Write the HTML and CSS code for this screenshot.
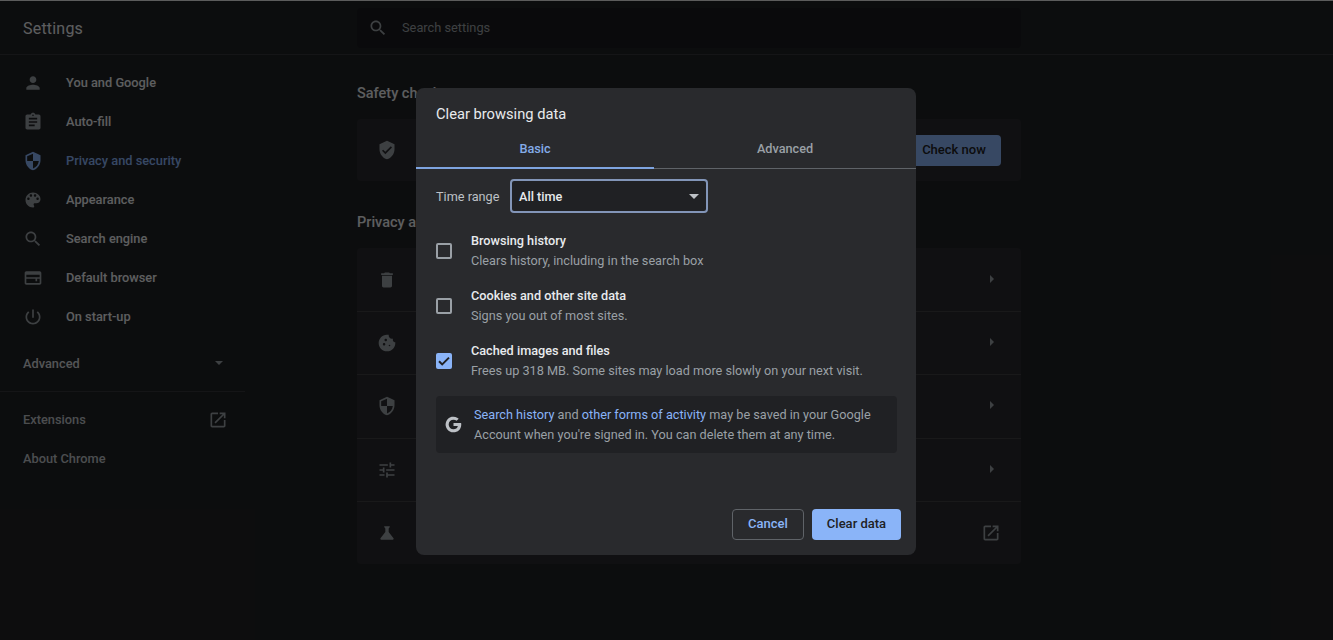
FILE: index.html
```html
<!DOCTYPE html>
<html lang="en">
<head>
    <meta charset="UTF-8">
    <title>Settings</title>
    <link rel="stylesheet" href="styles.css">
</head>
<body>
    <header class="topbar">
        <h1 class="app-title">Settings</h1>
        <div class="search-box">
            <svg class="icon" viewBox="0 0 24 24"><path d="M15.5 14h-.79l-.28-.27C15.41 12.59 16 11.11 16 9.5 16 5.91 13.09 3 9.5 3S3 5.91 3 9.5 5.91 16 9.5 16c1.61 0 3.09-.59 4.23-1.57l.27.28v.79l5 4.99L20.49 19l-4.99-5zm-6 0C7.01 14 5 11.99 5 9.5S7.01 5 9.5 5 14 7.01 14 9.5 11.99 14 9.5 14z"/></svg>
            <span>Search settings</span>
        </div>
    </header>

    <div class="content">
        <nav class="sidebar">
            <a class="nav-item">
                <svg class="icon" viewBox="0 0 24 24"><path d="M12 12c2.21 0 4-1.79 4-4s-1.79-4-4-4-4 1.79-4 4 1.79 4 4 4zm0 2c-2.67 0-8 1.34-8 4v2h16v-2c0-2.66-5.33-4-8-4z"/></svg>
                You and Google
            </a>
            <a class="nav-item">
                <svg class="icon" viewBox="0 0 24 24"><path d="M19 3h-4.18C14.4 1.84 13.3 1 12 1c-1.3 0-2.4.84-2.82 2H5c-1.1 0-2 .9-2 2v14c0 1.1.9 2 2 2h14c1.1 0 2-.9 2-2V5c0-1.1-.9-2-2-2zm-7 0c.55 0 1 .45 1 1s-.45 1-1 1-1-.45-1-1 .45-1 1-1zm2 14H7v-2h7v2zm3-4H7v-2h10v2zm0-4H7V7h10v2z"/></svg>
                Auto-fill
            </a>
            <a class="nav-item active">
                <svg class="icon" viewBox="0 0 24 24"><path d="M12 1L3 5v6c0 5.55 3.84 10.74 9 12 5.16-1.26 9-6.45 9-12V5l-9-4zm0 10.99h7c-.53 4.12-3.28 7.79-7 8.94V12H5V6.3l7-3.11v8.8z"/></svg>
                Privacy and security
            </a>
            <a class="nav-item">
                <svg class="icon" viewBox="0 0 24 24"><path d="M12 3c-4.97 0-9 4.03-9 9s4.03 9 9 9c.83 0 1.5-.67 1.5-1.5 0-.39-.15-.74-.39-1.01-.23-.26-.38-.61-.38-.99 0-.83.67-1.5 1.5-1.5H16c2.76 0 5-2.24 5-5 0-4.42-4.03-8-9-8zm-5.5 9c-.83 0-1.5-.67-1.5-1.5S5.67 9 6.5 9 8 9.67 8 10.5 7.33 12 6.5 12zm3-4C8.67 8 8 7.33 8 6.5S8.67 5 9.5 5s1.5.67 1.5 1.5S10.33 8 9.5 8zm5 0c-.83 0-1.5-.67-1.5-1.5S13.67 5 14.5 5s1.5.67 1.5 1.5S15.33 8 14.5 8zm3 4c-.83 0-1.5-.67-1.5-1.5S16.67 9 17.5 9s1.5.67 1.5 1.5-.67 1.5-1.5 1.5z"/></svg>
                Appearance
            </a>
            <a class="nav-item">
                <svg class="icon" viewBox="0 0 24 24"><path d="M15.5 14h-.79l-.28-.27C15.41 12.59 16 11.11 16 9.5 16 5.91 13.09 3 9.5 3S3 5.91 3 9.5 5.91 16 9.5 16c1.61 0 3.09-.59 4.23-1.57l.27.28v.79l5 4.99L20.49 19l-4.99-5zm-6 0C7.01 14 5 11.99 5 9.5S7.01 5 9.5 5 14 7.01 14 9.5 11.99 14 9.5 14z"/></svg>
                Search engine
            </a>
            <a class="nav-item">
                <svg class="icon" viewBox="0 0 24 24"><path d="M20 4H4c-1.1 0-2 .9-2 2v12c0 1.1.9 2 2 2h16c1.1 0 2-.9 2-2V6c0-1.1-.9-2-2-2zm0 14H4v-5h11v3h2v-3h3v5zm0-7H4V8h16v3z"/></svg>
                Default browser
            </a>
            <a class="nav-item">
                <svg class="icon" viewBox="0 0 24 24"><path d="M13 3h-2v10h2V3zm4.83 2.17l-1.42 1.42C17.99 7.86 19 9.81 19 12c0 3.87-3.13 7-7 7s-7-3.13-7-7c0-2.19 1.01-4.14 2.58-5.42L6.17 5.17C4.23 6.82 3 9.26 3 12c0 4.97 4.03 9 9 9s9-4.03 9-9c0-2.74-1.23-5.18-3.17-6.83z"/></svg>
                On start-up
            </a>
            <div class="nav-advanced">
                <span>Advanced</span>
                <span class="arrow-down"></span>
            </div>
            <a class="nav-link">
                <span>Extensions</span>
                <svg class="icon" viewBox="0 0 24 24"><path d="M19 19H5V5h7V3H5c-1.11 0-2 .9-2 2v14c0 1.1.89 2 2 2h14c1.1 0 2-.9 2-2v-7h-2v7zM14 3v2h3.59l-9.83 9.83 1.41 1.41L19 6.41V10h2V3h-7z"/></svg>
            </a>
            <a class="nav-link">About Chrome</a>
        </nav>

        <main class="main">
            <h2 class="section-title">Safety check</h2>
            <section class="card">
                <div class="row safety-row">
                    <svg class="icon" viewBox="0 0 24 24"><path d="M12 1L3 5v6c0 5.55 3.84 10.74 9 12 5.16-1.26 9-6.45 9-12V5l-9-4zm-2 16l-4-4 1.41-1.41L10 14.17l6.59-6.59L18 9l-8 8z"/></svg>
                    <div class="row-text"><div class="row-name">Chrome can help keep you safe from data breaches</div></div>
                    <button class="btn-check">Check now</button>
                </div>
            </section>

            <h2 class="section-title second">Privacy and security</h2>
            <section class="card">
                <div class="row">
                    <svg class="icon" viewBox="0 0 24 24"><path d="M6 19c0 1.1.9 2 2 2h8c1.1 0 2-.9 2-2V7H6v12zM19 4h-3.5l-1-1h-5l-1 1H5v2h14V4z"/></svg>
                    <div class="row-text"><div class="row-name">Clear browsing data</div><div class="row-sub">Clear history, cookies, cache and more</div></div>
                    <span class="arrow-right"></span>
                </div>
                <div class="row">
                    <svg class="icon" viewBox="0 0 24 24"><path d="M21.95 10.99c-1.79-.03-3.7-1.95-2.68-4.22-2.97 1-5.78-1.59-5.19-4.56C7.1.74 2 6.41 2 12c0 5.52 4.48 10 10 10 5.89 0 10.54-5.08 9.95-11.01zM8.5 15c-.83 0-1.5-.67-1.5-1.5S7.67 12 8.5 12s1.5.67 1.5 1.5S9.33 15 8.5 15zm2-5C9.67 10 9 9.33 9 8.5S9.67 7 10.5 7s1.5.67 1.5 1.5-.67 1.5-1.5 1.5zm4.5 6c-.55 0-1-.45-1-1s.45-1 1-1 1 .45 1 1-.45 1-1 1z"/></svg>
                    <div class="row-text"><div class="row-name">Cookies and other site data</div><div class="row-sub">Third-party cookies are blocked in Incognito mode</div></div>
                    <span class="arrow-right"></span>
                </div>
                <div class="row">
                    <svg class="icon" viewBox="0 0 24 24"><path d="M12 1L3 5v6c0 5.55 3.84 10.74 9 12 5.16-1.26 9-6.45 9-12V5l-9-4zm0 10.99h7c-.53 4.12-3.28 7.79-7 8.94V12H5V6.3l7-3.11v8.8z"/></svg>
                    <div class="row-text"><div class="row-name">Security</div><div class="row-sub">Safe Browsing and other security settings</div></div>
                    <span class="arrow-right"></span>
                </div>
                <div class="row">
                    <svg class="icon" viewBox="0 0 24 24"><path d="M3 17v2h6v-2H3zM3 5v2h10V5H3zm10 16v-2h8v-2h-8v-2h-2v6h2zM7 9v2H3v2h4v2h2V9H7zm14 4v-2H11v2h10zm-6-4h2V7h4V5h-4V3h-2v6z"/></svg>
                    <div class="row-text"><div class="row-name">Site settings</div><div class="row-sub">Controls what information sites can use and show</div></div>
                    <span class="arrow-right"></span>
                </div>
                <div class="row">
                    <svg class="icon" viewBox="0 0 24 24"><path d="M19.8 18.4L14 10.67V6.5l1.35-1.69c.26-.33.03-.81-.39-.81H9.04c-.42 0-.65.48-.39.81L10 6.5v4.17L4.2 18.4c-.49.66-.02 1.6.8 1.6h14c.82 0 1.29-.94.8-1.6z"/></svg>
                    <div class="row-text"><div class="row-name">Privacy Sandbox</div><div class="row-sub">Trial features are on</div></div>
                    <svg class="icon" viewBox="0 0 24 24"><path d="M19 19H5V5h7V3H5c-1.11 0-2 .9-2 2v14c0 1.1.89 2 2 2h14c1.1 0 2-.9 2-2v-7h-2v7zM14 3v2h3.59l-9.83 9.83 1.41 1.41L19 6.41V10h2V3h-7z"/></svg>
                </div>
            </section>
        </main>
    </div>

    <div class="scrim"></div>

    <div class="dialog">
        <h2 class="dialog-title">Clear browsing data</h2>
        <div class="tabs">
            <div class="tab tab-basic selected">Basic</div>
            <div class="tab tab-advanced">Advanced</div>
        </div>

        <div class="time-range">
            <span class="time-label">Time range</span>
            <div class="select">
                <span>All time</span>
                <span class="select-arrow"></span>
            </div>
        </div>

        <div class="check-row">
            <span class="checkbox"></span>
            <div>
                <div class="check-title">Browsing history</div>
                <div class="check-sub">Clears history, including in the search box</div>
            </div>
        </div>
        <div class="check-row">
            <span class="checkbox"></span>
            <div>
                <div class="check-title">Cookies and other site data</div>
                <div class="check-sub">Signs you out of most sites.</div>
            </div>
        </div>
        <div class="check-row">
            <span class="checkbox checked">
                <svg viewBox="0 0 16 16"><path d="M3 8.2l3.2 3.2L13 4.6" fill="none" stroke="#202124" stroke-width="2"/></svg>
            </span>
            <div>
                <div class="check-title">Cached images and files</div>
                <div class="check-sub">Frees up 318 MB. Some sites may load more slowly on your next visit.</div>
            </div>
        </div>

        <div class="info-box">
            <svg class="g-logo" viewBox="0 0 24 24"><path d="M21.6 10.2H12v3.7h5.5c-.6 2.6-2.8 4.2-5.5 4.2a6.1 6.1 0 1 1 0-12.2c1.5 0 2.9.5 3.9 1.5l2.7-2.7A9.9 9.9 0 1 0 12 21.9c5.4 0 9.8-3.7 9.8-9.9 0-.6-.1-1.2-.2-1.8z"/></svg>
            <p><a>Search history</a> and <a>other forms of activity</a> may be saved in your Google Account when you're signed in. You can delete them at any time.</p>
        </div>

        <div class="dialog-buttons">
            <button class="btn-cancel">Cancel</button>
            <button class="btn-clear">Clear data</button>
        </div>
    </div>
</body>
</html>
```

FILE: styles.css
```css
* {
    margin: 0;
    padding: 0;
    box-sizing: border-box;
}

html,
body {
    height: 100%;
    overflow: hidden;
}

body {
    position: relative;
    background-color: #202124;
    color: #e8eaed;
    font-family: Roboto, "Liberation Sans", sans-serif;
    font-size: 12.8px;
    border-top: 1px solid #5c5c5c;
}

.icon {
    width: 20px;
    height: 20px;
    flex-shrink: 0;
    fill: #9aa0a6;
}

button {
    font-family: inherit;
    font-size: 13px;
    font-weight: 500;
    border-radius: 4px;
}

/* top bar */

.topbar {
    display: flex;
    align-items: center;
    height: 54px;
    border-bottom: 1px solid #35363a;
}

.app-title {
    width: 357px;
    padding: 1px 0 0 23px;
    font-size: 16px;
    font-weight: 400;
    letter-spacing: 0.2px;
    color: #e8eaed;
}

.search-box {
    display: flex;
    align-items: center;
    gap: 14px;
    width: 664px;
    height: 40px;
    padding-left: 11px;
    background-color: #1a1b1e;
    border-radius: 4px;
    color: #9aa0a6;
}

/* sidebar */

.content {
    display: flex;
}

.sidebar {
    width: 357px;
    padding-top: 8px;
    font-weight: 500;
    color: #e8eaed;
}

.nav-item {
    display: flex;
    align-items: center;
    gap: 23px;
    width: 245px;
    height: 39px;
    padding-left: 23px;
}

.nav-item.active {
    color: #8ab4f8;
}

.nav-item.active .icon {
    fill: #8ab4f8;
}

.nav-advanced {
    display: flex;
    justify-content: space-between;
    align-items: center;
    width: 245px;
    height: 56px;
    padding: 0 22px 1px 23px;
    margin-bottom: 8px;
    border-bottom: 1px solid #35363a;
    color: #d2d5d9;
}

.arrow-down {
    border-left: 4px solid transparent;
    border-right: 4px solid transparent;
    border-top: 4px solid #9aa0a6;
}

.nav-link {
    display: flex;
    justify-content: space-between;
    align-items: center;
    width: 238px;
    height: 39px;
    padding: 0 10px 0 23px;
    color: #bdc1c6;
}

/* main column */

.main {
    width: 664px;
    padding-top: 29px;
}

.section-title {
    font-size: 14.5px;
    font-weight: 500;
    line-height: 20px;
    color: #e8eaed;
    margin-bottom: 15px;
}

.section-title.second {
    margin-top: 32px;
}

.card {
    background-color: #292a2d;
    border-radius: 4px;
}

.row {
    display: flex;
    align-items: center;
    height: 63.2px;
    padding: 0 20px;
    border-top: 1px solid #3f4042;
}

.row:first-child {
    border-top: none;
}

.safety-row {
    height: 62px;
}

.row-text {
    flex: 1;
    margin-left: 24px;
    line-height: 20px;
}

.row-sub {
    color: #9aa0a6;
}

.arrow-right {
    margin: 0 7px 2px 0;
    border-top: 4px solid transparent;
    border-bottom: 4px solid transparent;
    border-left: 4px solid #9aa0a6;
}

.btn-check {
    width: 94px;
    height: 31px;
    padding-bottom: 1px;
    background-color: #8ab4f8;
    color: #202124;
    border: none;
}

/* dialog on top of the dimmed page */

.scrim {
    position: absolute;
    inset: 0;
    background-color: rgba(0, 0, 0, 0.6);
}

.dialog {
    position: absolute;
    left: 416px;
    top: 87px;
    display: flex;
    flex-direction: column;
    width: 500px;
    height: 467px;
    background-color: #292a2d;
    border-radius: 8px;
    font-size: 12.7px;
}

.dialog-title {
    padding: 16px 20px 0;
    font-size: 14.7px;
    font-weight: 400;
    line-height: 20px;
    color: #e8eaed;
}

.tabs {
    display: flex;
    height: 45px;
    border-bottom: 1px solid #5f6368;
}

.tab {
    display: flex;
    justify-content: center;
    align-items: center;
    padding-top: 5px;
    font-weight: 500;
    color: #9aa0a6;
}

.tab-basic {
    width: 238px;
}

.tab-advanced {
    flex: 1;
}

.tab.selected {
    color: #84ace8;
    border-bottom: 2px solid #7ea4e0;
    margin-bottom: -1px;
}

.time-range {
    display: flex;
    align-items: center;
    gap: 10px;
    padding: 10px 20px 0;
    color: #bdc1c6;
}

.time-label {
    width: 64px;
    white-space: nowrap;
}

.select {
    display: flex;
    justify-content: space-between;
    align-items: center;
    width: 198px;
    height: 34px;
    padding: 0 7px;
    background-color: #202124;
    border: 2px solid #8295b8;
    border-radius: 4px;
    color: #e8eaed;
    font-weight: 500;
}

.select-arrow {
    border-left: 5px solid transparent;
    border-right: 5px solid transparent;
    border-top: 5px solid #bdc1c6;
}

.check-row {
    display: flex;
    align-items: center;
    gap: 19px;
    height: 55px;
    padding-left: 20px;
    line-height: 19.5px;
}

.time-range + .check-row {
    margin-top: 10px;
}

.checkbox {
    width: 16px;
    height: 16px;
    flex-shrink: 0;
    border: 2px solid #9aa0a6;
    border-radius: 2px;
}

.checkbox.checked {
    background-color: #8ab4f8;
    border: none;
}

.checkbox svg {
    display: block;
}

.check-title {
    font-weight: 500;
    color: #e8eaed;
}

.check-sub {
    color: #9aa0a6;
}

.info-box {
    display: flex;
    align-items: center;
    gap: 11px;
    width: 461px;
    height: 57px;
    margin: 8px 0 0 20px;
    padding: 0 20px 0 8px;
    background-color: #202124;
    border-radius: 4px;
    line-height: 20px;
    color: #9aa0a6;
}

.info-box a {
    color: #8ab4f8;
}

.g-logo {
    width: 19px;
    height: 19px;
    flex-shrink: 0;
    fill: #bdc1c6;
}

.dialog-buttons {
    display: flex;
    justify-content: flex-end;
    gap: 8px;
    margin-top: auto;
    padding: 0 15px 15px 0;
}

.btn-cancel {
    width: 72px;
    height: 31px;
    padding-bottom: 2px;
    background-color: transparent;
    border: 1px solid #5f6368;
    color: #8ab4f8;
}

.btn-clear {
    width: 89px;
    height: 31px;
    padding-bottom: 2px;
    background-color: #8ab4f8;
    border: none;
    color: #202124;
}
```
